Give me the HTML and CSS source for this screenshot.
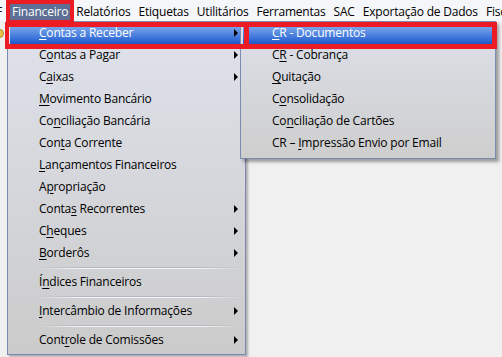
FILE: index.html
```html
<!DOCTYPE html>
<html lang="pt-BR">
<head>
<meta charset="utf-8">
<title>Financeiro</title>
<link rel="stylesheet" href="styles.css">
</head>
<body>
<div class="app">
  <nav class="menubar">
    <span class="mb-item mb-cut">F</span>
    <span class="mb-item active">Financeiro</span>
    <span class="mb-item">Relatórios</span>
    <span class="mb-item">Etiquetas</span>
    <span class="mb-item">Utilitários</span>
    <span class="mb-item">Ferramentas</span>
    <span class="mb-item">SAC</span>
    <span class="mb-item">Exportação de Dados</span>
    <span class="mb-item">Fiscal</span>
  </nav>
  <div class="workspace">
    <span class="tool-icon"></span>
    <div class="menu main-menu">
      <div class="item sub hl"><u>C</u>ontas a Receber</div>
      <div class="item sub">C<u>o</u>ntas a Pagar</div>
      <div class="item sub">C<u>a</u>ixas</div>
      <div class="item"><u>M</u>ovimento Bancário</div>
      <div class="item">Co<u>n</u>ciliação Bancária</div>
      <div class="item">Con<u>t</u>a Corrente</div>
      <div class="item"><u>L</u>ançamentos Financeiros</div>
      <div class="item">A<u>p</u>ropriação</div>
      <div class="item sub">Conta<u>s</u> Recorrentes</div>
      <div class="item sub">C<u>h</u>eques</div>
      <div class="item sub"><u>B</u>orderôs</div>
      <div class="sep"></div>
      <div class="item">Í<u>n</u>dices Financeiros</div>
      <div class="sep"></div>
      <div class="item sub"><u>I</u>ntercâmbio de Informações</div>
      <div class="sep"></div>
      <div class="item sub">Cont<u>r</u>ole de Comissões</div>
    </div>
    <div class="menu sub-menu">
      <div class="item hl"><u>C</u>R - Documentos</div>
      <div class="item">C<u>R</u> - Cobrança</div>
      <div class="item"><u>Q</u>uitação</div>
      <div class="item">C<u>o</u>nsolidação</div>
      <div class="item">Co<u>n</u>ciliação de Cartões</div>
      <div class="item">CR – <u>I</u>mpressão Envio por Email</div>
    </div>
    <div class="mark mark-main"></div>
    <div class="mark mark-sub"></div>
  </div>
  <div class="mark mark-bar"></div>
</div>
</body>
</html>
```

FILE: styles.css
```css
* { box-sizing: border-box; }
html, body { margin: 0; padding: 0; }
body {
  width: 502px;
  height: 357px;
  overflow: hidden;
  background: #f0f0f0;
  font-family: "Open Sans", "Noto Sans", sans-serif;
  font-size: 12px;
  letter-spacing: -0.2px;
  color: #000;
}
.app { position: relative; height: 357px; }

.menubar {
  display: flex;
  height: 21px;
  padding-top: 4px;
  background: #f4f6f9;
  white-space: nowrap;
  overflow: hidden;
}
.mb-item {
  height: 16px;
  line-height: 16px;
  padding: 0 4px;
  flex: none;
}
.mb-cut { margin-left: -8px; padding-right: 6px; }
.mb-item.active {
  background: #5d6f94;
  color: #fff;
}

.workspace { position: relative; height: 336px; }
.tool-icon {
  position: absolute;
  left: -5px; top: 8px;
  width: 9px; height: 9px;
  border-radius: 50%;
  background: #e8c24a;
  border: 1px solid #b08a20;
}

.menu {
  position: absolute;
  top: 0;
  border: 1px solid #7b8bb0;
  padding: 0 2px 3px;
  background: linear-gradient(to bottom, #dfe2eb, #cbcbcb);
}
.main-menu {
  left: 7px;
  width: 239px;
  box-shadow: 2px 2px 2px rgba(0, 0, 0, 0.28);
}
.sub-menu {
  left: 240px;
  width: 256px;
  padding-bottom: 4px;
  background: linear-gradient(to bottom, #dde0e9, #cecece);
  box-shadow: 3px 3px 3px rgba(0, 0, 0, 0.35);
}

.item {
  position: relative;
  height: 22px;
  line-height: 22px;
  padding-left: 29px;
  white-space: nowrap;
}
.item u { text-decoration: underline; text-underline-offset: 2px; }
.item.sub::after {
  content: "";
  position: absolute;
  right: 5px;
  top: 7px;
  border-style: solid;
  border-width: 4px 0 4px 4px;
  border-color: transparent transparent transparent #000;
}
.item.hl {
  color: #fff;
  background: linear-gradient(to bottom, #93b6f0 0%, #6a98e6 35%, #3a72da 75%, #1f56c8 100%);
}

.sep {
  height: 7px;
  margin-left: 28px;
  position: relative;
}
.sep::before {
  content: "";
  position: absolute;
  left: 0; right: 2px; top: 3px;
  height: 1px;
  background: linear-gradient(to right, rgba(176,180,192,0) 0%, #b4b8c4 20%, #b4b8c4 80%, rgba(176,180,192,0) 100%);
}
.sep::after {
  content: "";
  position: absolute;
  left: 0; right: 2px; top: 4px;
  height: 1px;
  background: linear-gradient(to right, rgba(255,255,255,0) 0%, #f4f4f6 20%, #f4f4f6 80%, rgba(255,255,255,0) 100%);
}

.mark {
  position: absolute;
  border: 4px solid #ed1c24;
  pointer-events: none;
}
.mark-bar { left: 6px; top: 0; width: 68px; height: 24px; }
.mark-main { left: 5px; top: 1px; width: 243px; height: 27px; border-width: 5px 4px; }
.mark-sub { left: 244px; top: 1px; width: 253px; height: 27px; border-width: 5px; }
```
